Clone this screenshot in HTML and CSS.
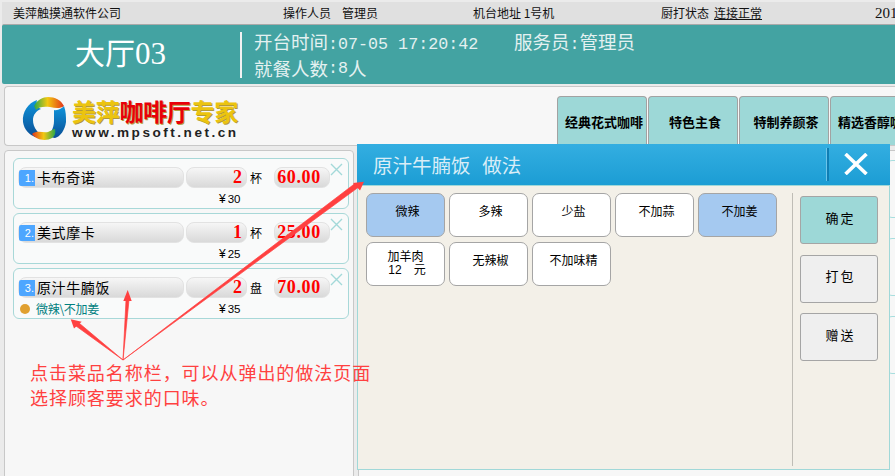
FILE: index.html
```html
<!DOCTYPE html>
<html lang="zh">
<head>
<meta charset="utf-8">
<title>美萍咖啡厅专家</title>
<link rel="stylesheet" href="styles.css">
</head>
<body>
<div class="app">
  <header class="topbar">
    <span class="tb-company">美萍触摸通软件公司</span>
    <span class="tb-op">操作人员</span><span class="tb-opname">管理员</span>
    <span class="tb-addr">机台地址 1号机</span>
    <span class="tb-kitchen">厨打状态</span><span class="tb-link">连接正常</span>
    <span class="tb-year">2018</span>
  </header>
  <section class="tablebar">
    <div class="tablename">大厅<span class="tn-num">03</span></div>
    <div class="tableinfo">
      <div class="info-row"><span class="info-open">开台时间<span class="m">:07-05 17:20:42</span></span><span>服务员<span class="m">:</span>管理员</span></div>
      <div class="info-row">就餐人数<span class="m">:8</span>人</div>
    </div>
  </section>
  <section class="brandbar">
    <div class="logo">
      <svg class="logo-mark" viewBox="0 0 44 44" aria-hidden="true">
        <defs>
          <linearGradient id="lg1" x1="0" y1="0" x2="0" y2="1"><stop offset="0" stop-color="#0f95dc"/><stop offset="1" stop-color="#0a4f96"/></linearGradient>
          <linearGradient id="lg2" x1="0" y1="0" x2="1" y2="0"><stop offset="0" stop-color="#e2351c"/><stop offset=".5" stop-color="#f2c811"/><stop offset="1" stop-color="#2aa84a"/></linearGradient>
          <linearGradient id="lg3" x1="0" y1="0" x2="1" y2="0"><stop offset="0" stop-color="#2aa84a"/><stop offset=".45" stop-color="#f2c811"/><stop offset="1" stop-color="#e2351c"/></linearGradient>
        </defs>
        <path d="M15 3C6 6 0 15 1 25C2 33 8 38 13 40C17 41 18 37 15 34C12 30 11 27 11 23C11 18 14 14 19 12C15 10 14 6 15 3Z" fill="url(#lg1)"/>
        <path d="M12 9C15 3 21 0 26 0C33 0 39 3 42 9C38 12 33 11 28 10C22 9 16 10 14 13Z" fill="url(#lg3)"/>
        <path d="M32 13C36 14 40 11 42 9C44 14 44 20 44 25C43 33 38 40 33 41C29 41 28 38 29 35C31 31 32 28 32 24C32 20 32 16 32 13Z" fill="url(#lg1)"/>
        <path d="M10 37C15 33 21 36 26 35C29 34 31 32 33 32C34 36 33 39 30 41C25 44 15 44 10 37Z" fill="url(#lg2)"/>
      </svg>
      <div class="logo-text">
        <div class="logo-cn"><span class="yellow">美萍</span><span class="red">咖啡厅</span><span class="yellow">专家</span></div>
        <div class="logo-url">www.mpsoft.net.cn</div>
      </div>
    </div>
    <nav class="tabs">
      <div class="tab">经典花式咖啡</div>
      <div class="tab">特色主食</div>
      <div class="tab">特制养颜茶</div>
      <div class="tab">精选香醇咖啡</div>
    </nav>
  </section>
  <main class="content">
    <aside class="orders">
      <article class="order">
        <div class="order-line">
          <div class="pill name"><span class="idx">1.</span>卡布奇诺</div>
          <div class="pill qty">2</div><span class="unit">杯</span>
          <div class="pill amount">60.00</div>
          <svg class="del" viewBox="0 0 13 13" aria-hidden="true"><path d="M1 1l11 11M12 1L1 12"/></svg>
        </div>
        <div class="order-sub"><span class="price"><b>¥</b>30</span></div>
      </article>
      <article class="order">
        <div class="order-line">
          <div class="pill name"><span class="idx">2.</span>美式摩卡</div>
          <div class="pill qty">1</div><span class="unit">杯</span>
          <div class="pill amount">25.00</div>
          <svg class="del" viewBox="0 0 13 13" aria-hidden="true"><path d="M1 1l11 11M12 1L1 12"/></svg>
        </div>
        <div class="order-sub"><span class="price"><b>¥</b>25</span></div>
      </article>
      <article class="order">
        <div class="order-line">
          <div class="pill name"><span class="idx">3.</span>原汁牛腩饭</div>
          <div class="pill qty">2</div><span class="unit">盘</span>
          <div class="pill amount">70.00</div>
          <svg class="del" viewBox="0 0 13 13" aria-hidden="true"><path d="M1 1l11 11M12 1L1 12"/></svg>
        </div>
        <div class="order-sub"><i class="dot"></i><span class="note">微辣\不加姜</span><span class="price"><b>¥</b>35</span></div>
      </article>
    </aside>
    <div class="menu">
      <div class="menu-card"></div>
      <div class="menu-card"></div>
      <div class="menu-card"></div>
    </div>
  </main>

  <section class="popup">
    <header class="popup-head">
      <h1 class="popup-title">原汁牛腩饭&nbsp;&nbsp;做法</h1>
      <div class="popup-close">
        <svg viewBox="0 0 24 22" aria-hidden="true"><path d="M1.5 1l21 20M22.5 1l-21 20"/></svg>
      </div>
    </header>
    <div class="popup-body">
      <div class="options">
        <button class="opt on">微辣</button>
        <button class="opt">多辣</button>
        <button class="opt">少盐</button>
        <button class="opt">不加蒜</button>
        <button class="opt on">不加姜</button>
        <button class="opt two">加羊肉<br><span class="addon"><span>12</span><span>元</span></span></button>
        <button class="opt">无辣椒</button>
        <button class="opt">不加味精</button>
      </div>
      <div class="actions">
        <button class="act ok">确定</button>
        <button class="act">打包</button>
        <button class="act">赠送</button>
      </div>
    </div>
  </section>

  <svg class="arrows" viewBox="0 0 895 476" aria-hidden="true">
    <path class="shaft" d="M123 360L79 323L76 326ZM123 360L126 300L129 300ZM123 360L355 183.500L358 187.500Z"/>
    <path class="head" d="M70.700 319.300L81.700 321.700L74 328.500ZM127.700 290L131.700 301L123.300 301ZM364 181.700L353 183L360 190.500Z"/>
  </svg>
  <p class="callout">点击菜品名称栏，可以从弹出的做法页面<br>选择顾客要求的口味。</p>
</div>
</body>
</html>
```
FILE: styles.css
```css
* { box-sizing: border-box; }
html, body { margin: 0; padding: 0; }
body {
  width: 895px; height: 476px; overflow: hidden; background: #ebebeb;
  font-family: "Noto Sans CJK SC", "Liberation Sans", sans-serif; color: #000;
}
.app { position: relative; width: 895px; height: 476px; overflow: hidden; display: flex; flex-direction: column; padding-top: 2px; }

.topbar { height: 22px; margin-left: 2px; background: #e0e0e0; font-size: 12px; line-height: 22px; display: flex; white-space: nowrap; color: #111; flex: none; }
.topbar span { flex: none; }
.tb-company { margin-left: 11px; width: 270px; }
.tb-op { width: 59px; }
.tb-opname { width: 131px; }
.tb-addr { width: 188px; }
.tb-kitchen { width: 53px; }
.tb-link { text-decoration: underline; width: 161px; }
.tb-year { font: 15px "Liberation Serif", serif; line-height: 22px; }

.tablebar { height: 60px; margin: 0 0 0 2px; background: #43a3a2; border-top: 1px solid #a9a9a9; color: #fff; display: flex; flex: none; border-radius: 2px 0 0 2px; }
.tablename { width: 238px; padding: 8px 0 0 73px; font-size: 30px; line-height: 36px; white-space: nowrap; }
.tn-num { font-family: "Liberation Serif", serif; font-size: 31px; }
.tableinfo { margin-top: 7px; height: 46px; border-left: 2px solid #f2f2f2; padding-left: 12px; font-size: 18.5px; line-height: 27px; color: #e4f1f1; }
.info-row { white-space: nowrap; display: flex; height: 27px; margin-top: -4px; }
.info-row + .info-row { margin-top: 0; }
.info-open { width: 260px; }
.m { font-family: "Liberation Mono", monospace; font-size: 16.7px; }

.brandbar { height: 60px; margin: 2px 0 0 4px; background: #f7f7f7; border: 1px solid #c8c8c8; border-right: 0; border-radius: 4px 0 0 4px; display: flex; justify-content: space-between; flex: none; }
.logo { display: flex; padding: 10px 0 0 17px; gap: 6px; }
.logo-mark { width: 44px; height: 44px; }
.logo-text { padding-top: 1px; }
.logo-cn { font-size: 24px; font-weight: 700; line-height: 26px; white-space: nowrap; letter-spacing: -.3px; }
.yellow { color: #ecc40e; text-shadow: 1px 1px 0 #b39a3a; }
.red { color: #e8000a; text-shadow: 1px 1px 0 #b0a040; }
.logo-url { font: 700 13.6px/16px "Liberation Sans", sans-serif; letter-spacing: 2.5px; color: #222; margin-top: 1px; white-space: nowrap; }
.tabs { display: flex; gap: 1px; padding-top: 9px; width: 338px; overflow: hidden; flex: none; }
.tab { width: 90px; height: 52px; flex: none; background: #9dd8d7; border: 1px solid #a2a2a2; border-bottom: 0; border-radius: 4px 4px 0 0; font-size: 13px; font-weight: 700; line-height: 50px; text-align: center; white-space: nowrap; padding-left: 4px; }

.content { flex: 1; padding-top: 4px; padding-left: 4px; min-height: 0; display: flex; gap: 4px; }
.orders { width: 350px; height: 340px; flex: none; background: #f7f7f7; border: 1px solid #c8c8c8; border-radius: 4px; padding: 7px 4px 0 8px; display: flex; flex-direction: column; gap: 4px; }
.order { height: 51px; background: #f9fafa; border: 1px solid #a8d8d8; border-radius: 6px; padding: 8px 0 0 4px; }
.order-line { display: flex; align-items: flex-start; position: relative; height: 22px; }
.pill { height: 21px; border-radius: 8px; border: 1px solid #e2e2e2; background: linear-gradient(#f6f6f6, #d9d9d9); flex: none; }
.name { width: 166px; font-size: 14px; line-height: 18px; display: flex; align-items: flex-start; white-space: nowrap; letter-spacing: .6px; }
.idx { width: 16px; height: 16px; margin: 2px 2px 0 0; background: #4da6ff; color: #fff; font: 11px/17px "Liberation Sans", sans-serif; text-align: right; padding-right: 1px; letter-spacing: 0; border-radius: 2px 0 0 2px; }
.qty { width: 61px; margin-left: 2px; color: #f00; font: 700 18px/19px "Liberation Serif", serif; text-align: right; padding-right: 4px; }
.unit { width: 27px; padding-left: 3px; font-size: 12px; line-height: 21px; }
.amount { width: 56px; color: #f00; font: 700 18px/19px "Liberation Serif", serif; text-align: center; letter-spacing: .6px; padding-right: 6px; }
.del { position: absolute; left: 312px; top: -4px; width: 13px; height: 13px; }
.del path { stroke: #a3d9d9; stroke-width: 1.4; fill: none; }
.order-sub { position: relative; height: 20px; display: flex; align-items: center; }
.dot { width: 10px; height: 10px; background: #e0a030; border-radius: 50%; margin: 0 6px 0 2px; }
.note { color: #008080; font-size: 12px; line-height: 16px; white-space: nowrap; letter-spacing: -.3px; }
.price { position: absolute; left: 201px; top: 2px; font: 11.5px/16px "Liberation Sans", sans-serif; white-space: nowrap; }
.price b { font-weight: 400; font-size: 12px; margin-right: 2px; }

.menu { flex: 1; height: 340px; background: #f7f7f7; border: 1px solid #c8c8c8; border-right: 0; padding: 9px 0 0 527px; display: flex; flex-direction: column; gap: 20px; overflow: hidden; }
.menu-card { width: 30px; height: 58px; flex: none; border: 1px solid #a8dede; border-radius: 6px; }

.popup { position: absolute; left: 357px; top: 144px; width: 533px; height: 326px; display: flex; flex-direction: column; }
.popup-head { height: 41px; background: linear-gradient(#33aee1, #1c9dd4); display: flex; align-items: center; justify-content: space-between; flex: none; }
.popup-title { margin: 0 0 0 16px; font-size: 19.5px; font-weight: 400; color: #d9edf7; white-space: nowrap; word-spacing: 1.5px; }
.popup-close { width: 63px; height: 33px; margin-top: -1px; border-left: 2px solid #0f7eb4; display: flex; align-items: center; justify-content: center; box-shadow: -1px 0 0 #6cc4ea; }
.popup-close svg { width: 24px; height: 22px; margin-right: 8px; }
.popup-close path { stroke: #fff; stroke-width: 3.6; fill: none; }
.popup-body { flex: 1; background: #f3f0e8; border: 1px solid #a0d8d8; display: flex; padding: 7px 0 3px 8px; min-height: 0; }
.options { width: 427px; display: flex; flex-wrap: wrap; gap: 5px 4px; align-content: flex-start; }
.opt { width: 79px; height: 44px; background: #fff; border: 1px solid #a5a5a5; border-radius: 7px; font: 12px/15px "Noto Sans CJK SC", sans-serif; padding: 0 0 9px 4px; text-align: center; color: #000; }
.opt.on { background: #a5c9f0; }
.opt.two { padding: 0 0 2px; }
.addon { display: flex; justify-content: center; gap: 12px; padding-left: 3px; font-family: "Liberation Sans", "Noto Sans CJK SC", sans-serif; }
.actions { width: 88px; margin-left: -1px; border-left: 1px solid #bfbdb6; padding: 3px 0 0 7px; display: flex; flex-direction: column; gap: 10.5px; align-self: stretch; }
.act { width: 78px; height: 48px; flex: none; background: #efefef; border: 1px solid #a5a5a5; border-radius: 3px; font: 13px "Noto Sans CJK SC", sans-serif; letter-spacing: 2px; color: #000; padding: 0 0 6px 3px; }
.act.ok { background: #9dd8d7; }

.arrows { position: absolute; left: 0; top: 0; width: 895px; height: 476px; pointer-events: none; }
.shaft { fill: #ff4040; stroke: #ff4040; stroke-width: .7; stroke-linejoin: round; }
.head { fill: #ff4040; }
.callout { position: absolute; left: 30px; top: 360px; margin: 0; font-size: 18px; line-height: 25px; letter-spacing: .95px; color: #ff4040; white-space: nowrap; }
```
